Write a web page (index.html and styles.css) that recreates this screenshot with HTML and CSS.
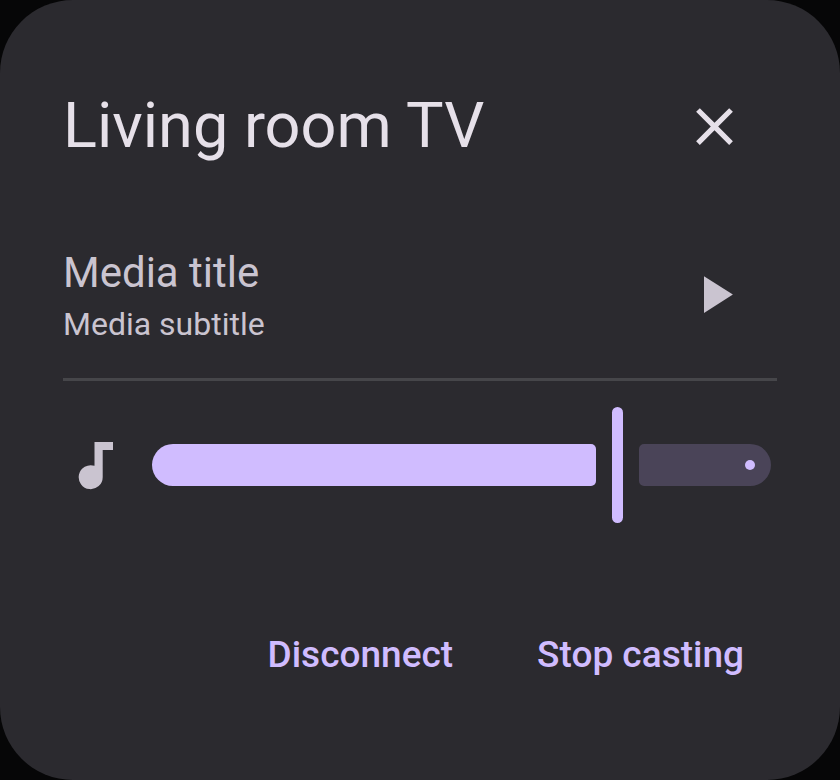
FILE: index.html
```html
<!DOCTYPE html>
<html lang="en">
<head>
<meta charset="utf-8">
<meta name="viewport" content="width=device-width, initial-scale=1">
<title>Living room TV</title>
<link rel="stylesheet" href="styles.css">
</head>
<body>
<main class="dialog">
  <header class="row">
    <h1 class="title">Living room TV</h1>
    <button class="icon-button close" type="button" aria-label="Close">
      <svg class="icon" viewBox="0 0 24 24" aria-hidden="true"><path d="M19 6.41 17.59 5 12 10.59 6.41 5 5 6.41 10.59 12 5 17.59 6.41 19 12 13.41 17.59 19 19 17.59 13.41 12z"/></svg>
    </button>
  </header>
  <section class="row media">
    <div class="media-text">
      <h2 class="media-title">Media title</h2>
      <p class="media-subtitle">Media subtitle</p>
    </div>
    <button class="icon-button" type="button" aria-label="Play">
      <svg class="icon" viewBox="0 0 24 24" aria-hidden="true"><path d="M8 5v14l11-7z"/></svg>
    </button>
  </section>
  <hr class="divider">
  <section class="volume">
    <svg class="note" viewBox="0 -2 36 50" aria-hidden="true"><path d="M16.500 0H35v8H24.700v27.200A12 12 0 1 1 16.500 23.800z"/></svg>
    <div class="slider">
      <span class="track active" style="flex-grow: 77"></span>
      <span class="handle"></span>
      <span class="track inactive" style="flex-grow: 23"></span>
      <input class="range" type="range" min="0" max="100" value="77" aria-label="Volume">
    </div>
  </section>
  <footer class="actions">
    <button class="text-button" type="button">Disconnect</button>
    <button class="text-button" type="button">Stop casting</button>
  </footer>
</main>
</body>
</html>
```

FILE: styles.css
```css
* {
  box-sizing: border-box;
}

body {
  margin: 0;
  background: #060607;
  color: #cac4d0;
  font-family: Roboto, "Liberation Sans", sans-serif;
}

h1, h2, p {
  margin: 0;
  font-weight: 400;
}

button {
  border: 0;
  background: none;
  color: inherit;
  font-family: inherit;
  cursor: pointer;
}

.dialog {
  min-height: 100vh;
  padding: 63px;
  border-radius: 73px;
  background: #2b2a2f;
}

.row {
  display: flex;
  align-items: center;
  justify-content: space-between;
}

.title {
  color: #e6e0e9;
  font-size: 63px;
  line-height: 84px;
}

.icon-button {
  display: flex;
  align-items: center;
  justify-content: center;
  flex: none;
  width: 126px;
  height: 126px;
  padding: 0;
  border-radius: 50%;
}

.close {
  color: #e6e0e9;
}

.icon {
  width: 63px;
  height: 63px;
  fill: currentColor;
}

.media {
  margin-top: 42px;
}

.media-title {
  font-size: 42px;
  line-height: 60px;
}

.media-subtitle {
  font-size: 32px;
  line-height: 42px;
}

.divider {
  height: 3px;
  margin: 21px 0 26px;
  border: 0;
  background: #46464a;
}

.volume {
  display: flex;
  align-items: center;
  gap: 38px;
  padding: 0 6px 0 15px;
}

.note {
  flex: none;
  width: 36px;
  height: 50px;
  fill: currentColor;
}

.slider {
  position: relative;
  display: flex;
  flex: 1;
  align-items: center;
  gap: 16px;
}

.track {
  flex-basis: 0;
  height: 42px;
}

.active {
  border-radius: 21px 5px 5px 21px;
  background: #d0bcff;
}

.inactive {
  display: flex;
  align-items: center;
  justify-content: flex-end;
  border-radius: 5px 21px 21px 5px;
  background: #4a4458;
}

.inactive::after {
  content: "";
  width: 10px;
  height: 10px;
  margin-right: 16px;
  border-radius: 50%;
  background: #d0bcff;
}

.handle {
  width: 11px;
  height: 116px;
  border-radius: 6px;
  background: #d0bcff;
}

.range {
  position: absolute;
  inset: 0;
  width: 100%;
  height: 100%;
  margin: 0;
  opacity: 0;
  cursor: pointer;
}

.actions {
  display: flex;
  flex-wrap: wrap;
  justify-content: flex-end;
  gap: 18px;
  margin-top: 79px;
}

.text-button {
  height: 105px;
  padding: 0 33px;
  border-radius: 53px;
  color: #d0bcff;
  font-size: 37px;
  font-weight: 500;
  line-height: 53px;
}
```
